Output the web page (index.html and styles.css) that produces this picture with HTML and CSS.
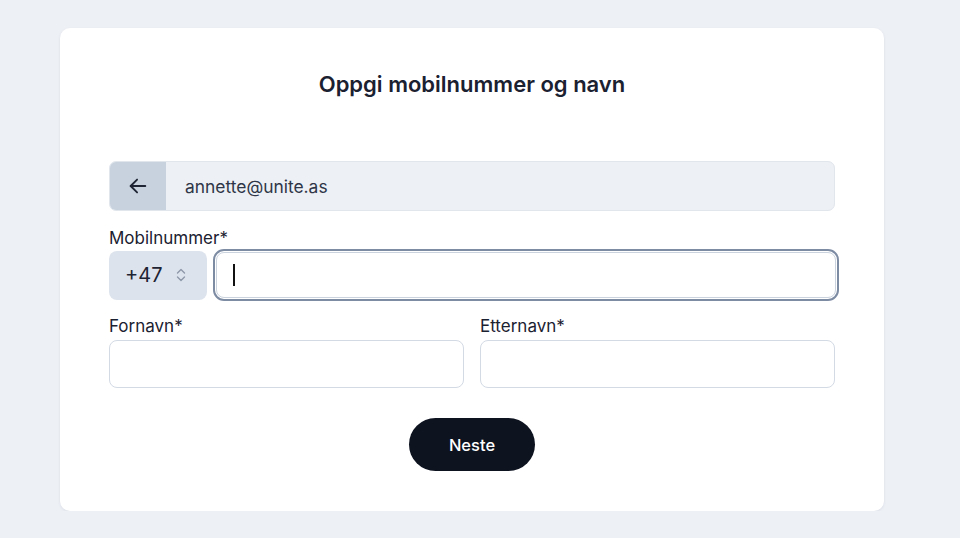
FILE: index.html
```html
<!DOCTYPE html>
<html lang="no">
<head>
<meta charset="utf-8">
<link rel="stylesheet" href="styles.css">
</head>
<body>
<main class="card">
  <h1 class="title">Oppgi mobilnummer og navn</h1>
  <div class="email-row">
    <button class="back" aria-label="Tilbake">
      <svg width="22" height="22" viewBox="0 0 24 24" fill="none" stroke="#1e2433" stroke-width="2" stroke-linecap="round" stroke-linejoin="round"><path d="M20 12H4"/><path d="M11 19l-7-7 7-7"/></svg>
    </button>
    <span class="email">annette@unite.as</span>
  </div>
  <label class="label label-phone">Mobilnummer*</label>
  <div class="phone-row">
    <div class="cc">
      <span>+47</span>
      <svg width="12" height="16" viewBox="0 0 12 16" fill="none" stroke="#8d97a8" stroke-width="1.4" stroke-linecap="round" stroke-linejoin="round"><path d="M2.5 6l3.5-3.5 3.5 3.5"/><path d="M2.5 10l3.5 3.5 3.5-3.5"/></svg>
    </div>
    <div class="input focus"><span class="caret"></span></div>
  </div>
  <div class="names">
    <div class="field">
      <label class="label">Fornavn*</label>
      <div class="input"></div>
    </div>
    <div class="field">
      <label class="label">Etternavn*</label>
      <div class="input"></div>
    </div>
  </div>
  <div class="actions">
    <button class="next">Neste</button>
  </div>
</main>
</body>
</html>
```
FILE: styles.css
```css
* { box-sizing: border-box; }
html, body { margin: 0; padding: 0; }
body {
  background: #edf0f5;
  font-family: Inter, "Noto Sans", "Liberation Sans", sans-serif;
  color: #1e2433;
  padding: 28px 76px 0 60px;
}
.card {
  background: #fff;
  border-radius: 10px;
  box-shadow: 0 1px 3px rgba(30, 40, 60, 0.08);
  padding: 43px 49px 40px 49px;
  width: 824px;
}
.title {
  margin: 0;
  text-align: center;
  font-size: 22px;
  line-height: 26px;
  font-weight: 600;
  color: #1b2130;
}
.email-row {
  margin-top: 64px;
  height: 50px;
  display: flex;
  align-items: center;
  background: #edf0f5;
  border: 1px solid #e1e6ed;
  border-radius: 7px;
  overflow: hidden;
}
.back {
  width: 56px;
  height: 100%;
  border: 0;
  padding: 0;
  background: #c8d2de;
  display: flex;
  align-items: center;
  justify-content: center;
}
.email {
  margin-left: 19px;
  font-size: 17.4px;
  color: #2f3647;
}
.label {
  display: block;
  font-size: 17px;
  line-height: 20px;
  font-weight: 400;
  color: #1b2130;
}
.label-phone { margin-top: 17px; }
.phone-row {
  margin-top: 2px;
  display: flex;
  align-items: center;
  gap: 8px;
  height: 50px;
}
.cc {
  width: 98px;
  height: 49px;
  background: #dde3ec;
  border-radius: 8px;
  display: flex;
  align-items: center;
  padding-left: 16px;
  gap: 13px;
  font-size: 20px;
  color: #1e2433;
}
.input {
  height: 48px;
  border: 1px solid #d3dae4;
  border-radius: 8px;
  background: #fff;
}
.phone-row .input {
  flex: 1;
  height: 46px;
  margin: 0 -1px 0 1px;
  display: flex;
  align-items: center;
  padding-left: 16px;
  outline: 2px solid #7d8ba3;
  outline-offset: 1px;
  border-color: #cbd3de;
}
.caret {
  width: 1.5px;
  height: 22px;
  background: #111;
}
.names {
  margin-top: 16px;
  display: grid;
  grid-template-columns: 1fr 1fr;
  gap: 16px;
}
.field .input { margin-top: 4px; }
.actions {
  margin-top: 30px;
  display: flex;
  justify-content: center;
}
.next {
  width: 126px;
  height: 53px;
  border: 0;
  border-radius: 27px;
  background: #0e1320;
  color: #fff;
  font-family: inherit;
  font-size: 16.5px;
  font-weight: 500;
  padding: 0;
}
```
